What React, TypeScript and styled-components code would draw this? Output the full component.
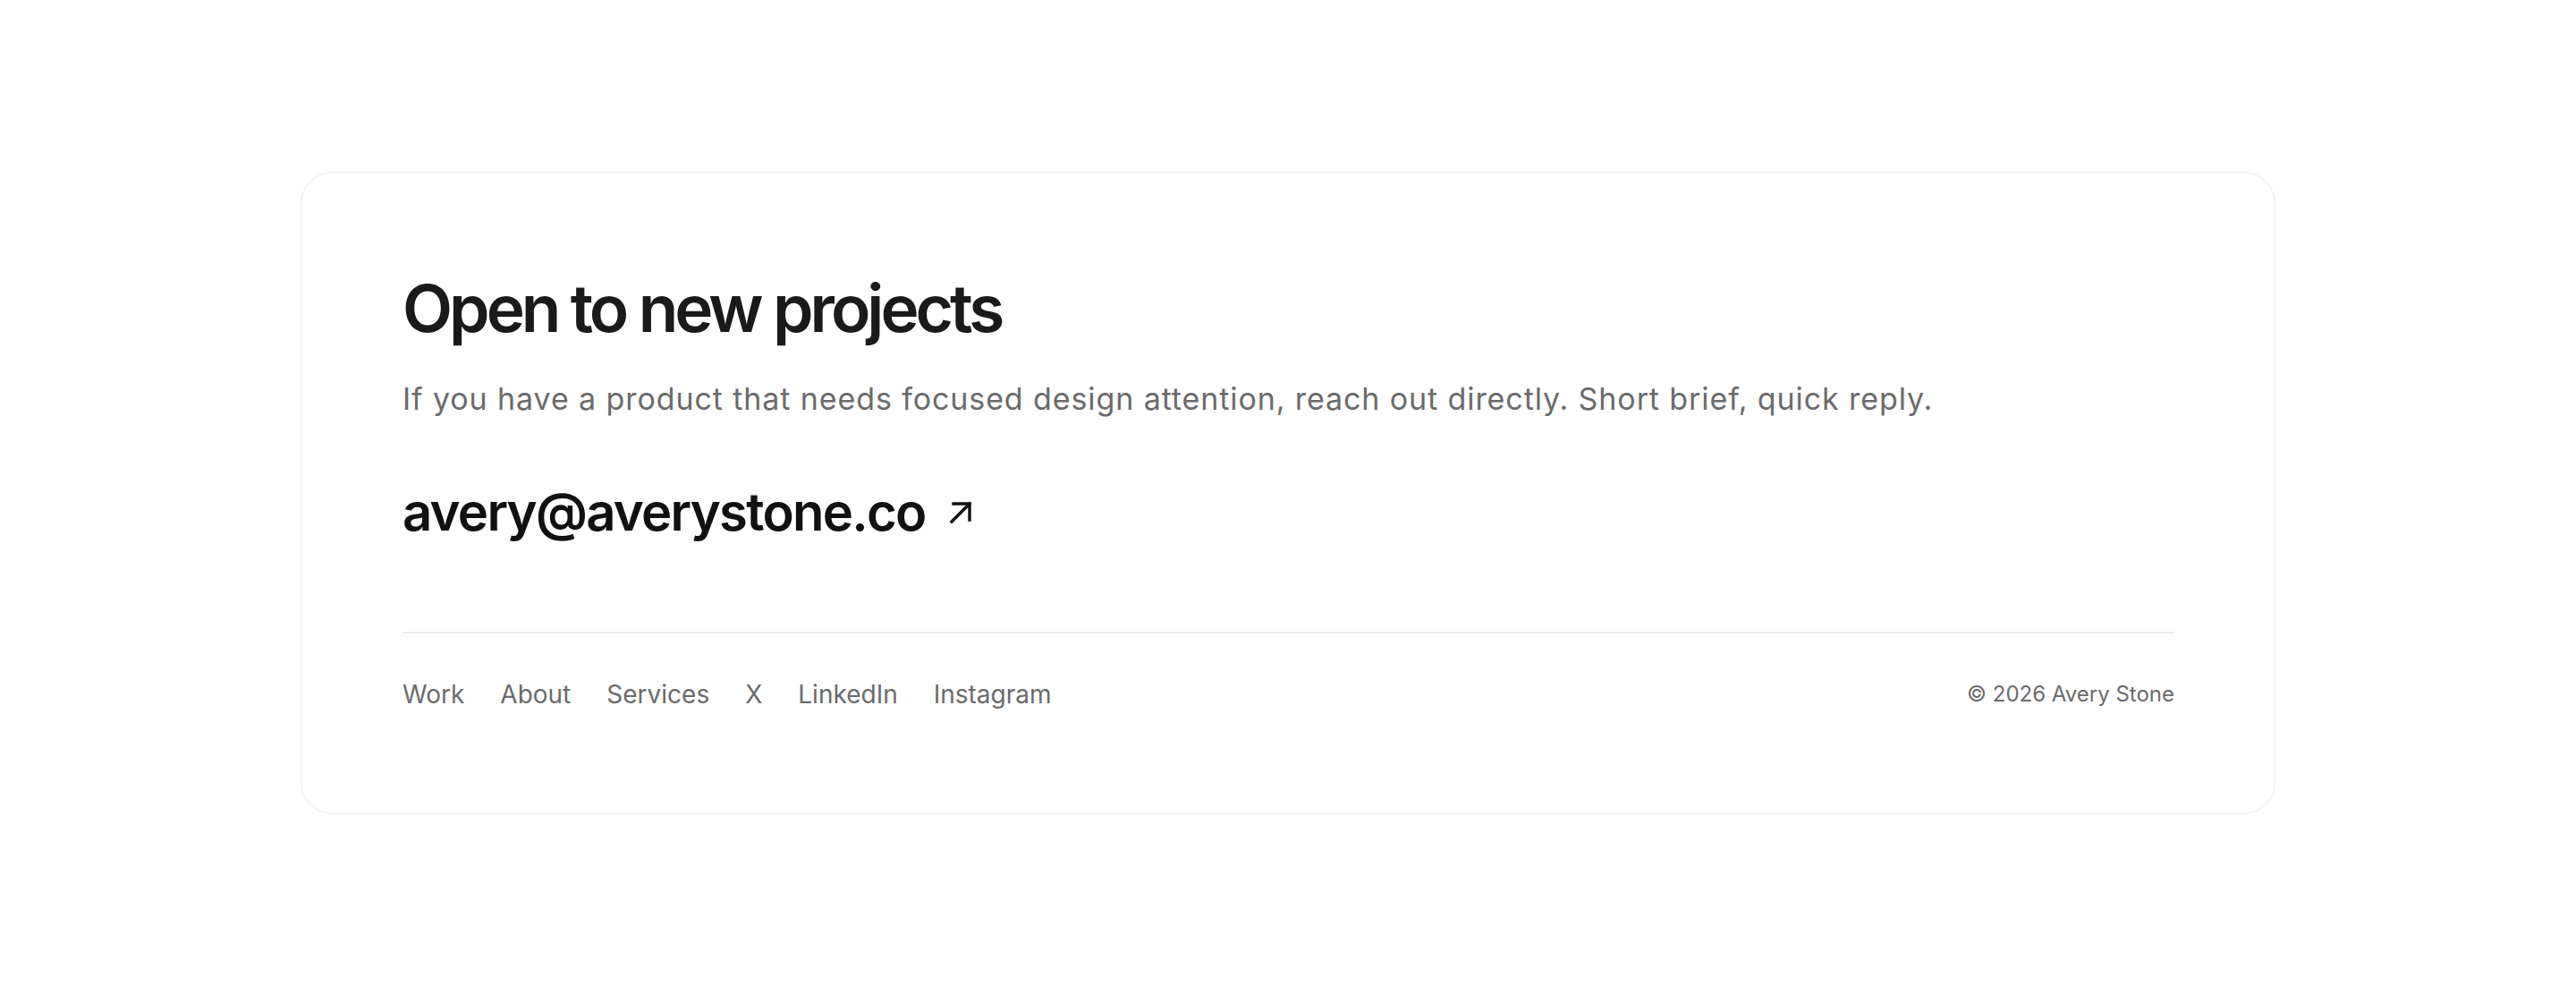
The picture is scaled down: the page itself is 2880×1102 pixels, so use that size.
import React from "react";
import styled, { createGlobalStyle } from "styled-components";

const Global = createGlobalStyle`
  html, body { margin: 0; padding: 0; background: #ffffff; }
  body { font-family: Inter, "Noto Sans", "Liberation Sans", sans-serif; -webkit-font-smoothing: antialiased; }
  * { box-sizing: border-box; }
`;

const Page = styled.main`
  min-height: 100vh;
  display: flex;
  align-items: center;
  justify-content: center;
`;

const Card = styled.section`
  width: 2208px;
  border: 1px solid #ebebeb;
  border-radius: 36px;
  padding: 112px 112px 112px 113px;
  background: #ffffff;
`;

const Heading = styled.h2`
  margin: 0;
  font-size: 73px;
  line-height: 1.1;
  font-weight: 600;
  letter-spacing: -0.055em;
  color: #1a1a1a;
`;

const Lead = styled.p`
  margin: 36px 0 0;
  font-size: 34px;
  line-height: 1.45;
  letter-spacing: 0.9px;
  color: #6b6b6b;
`;

const EmailLink = styled.a`
  display: inline-flex;
  align-items: center;
  gap: 26px;
  margin-top: 68px;
  font-size: 58px;
  line-height: 1.16;
  font-weight: 600;
  letter-spacing: -0.03em;
  color: #111111;
  text-decoration: none;
`;

const Arrow = styled.svg`
  width: 26px;
  height: 26px;
  flex: none;
  margin-top: 2px;
`;

const Footer = styled.footer`
  margin-top: 100px;
  border-top: 2px solid #eeeeee;
  padding-top: 47px;
  display: flex;
  align-items: center;
  justify-content: space-between;
`;

const Nav = styled.nav`
  display: flex;
  gap: 40px;
`;

const NavLink = styled.a`
  font-size: 28px;
  line-height: 1.5;
  color: #6b6b6b;
  text-decoration: none;
`;

const Copy = styled.span`
  font-size: 24px;
  line-height: 1.5;
  color: #6b6b6b;
`;

const links = ["Work", "About", "Services", "X", "LinkedIn", "Instagram"];

export default function App() {
  return (
    <>
      <Global />
      <Page>
        <Card>
          <Heading>Open to new projects</Heading>
          <Lead>
            If you have a product that needs focused design attention, reach out directly. Short brief, quick reply.
          </Lead>
          <EmailLink href="#">
            avery@averystone.co
            <Arrow viewBox="0 0 26 26" fill="none" stroke="#111" strokeWidth="3.4" strokeLinecap="square">
              <path d="M3 23 L23 3" />
              <path d="M5 3 H23 V21" />
            </Arrow>
          </EmailLink>
          <Footer>
            <Nav>
              {links.map((l) => (
                <NavLink key={l} href="#">{l}</NavLink>
              ))}
            </Nav>
            <Copy>© 2026 Avery Stone</Copy>
          </Footer>
        </Card>
      </Page>
    </>
  );
}
